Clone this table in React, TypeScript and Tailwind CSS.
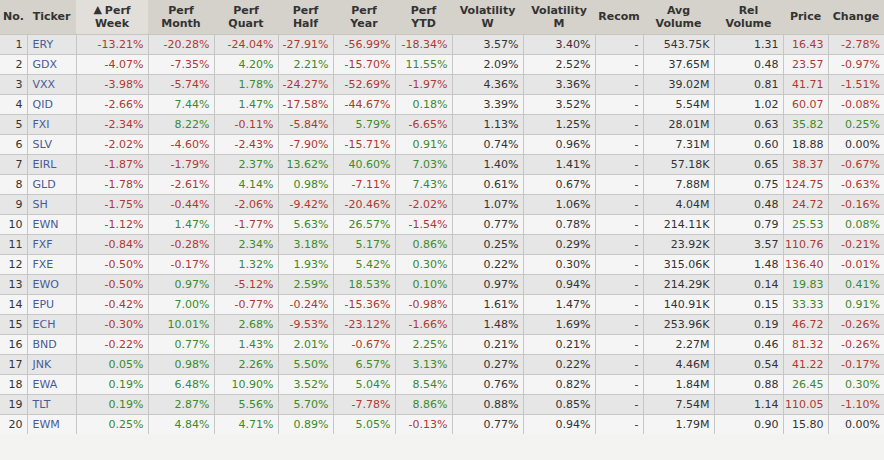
type Row = [string, string, string, string, string, string, string, string, string, string, string, string, string, string];

const rows: Row[] = [
  ['ERY', '-13.21%', '-20.28%', '-24.04%', '-27.91%', '-56.99%', '-18.34%', '3.57%', '3.40%', '-', '543.75K', '1.31', '16.43', '-2.78%'],
  ['GDX', '-4.07%', '-7.35%', '4.20%', '2.21%', '-15.70%', '11.55%', '2.09%', '2.52%', '-', '37.65M', '0.48', '23.57', '-0.97%'],
  ['VXX', '-3.98%', '-5.74%', '1.78%', '-24.27%', '-52.69%', '-1.97%', '4.36%', '3.36%', '-', '39.02M', '0.81', '41.71', '-1.51%'],
  ['QID', '-2.66%', '7.44%', '1.47%', '-17.58%', '-44.67%', '0.18%', '3.39%', '3.52%', '-', '5.54M', '1.02', '60.07', '-0.08%'],
  ['FXI', '-2.34%', '8.22%', '-0.11%', '-5.84%', '5.79%', '-6.65%', '1.13%', '1.25%', '-', '28.01M', '0.63', '35.82', '0.25%'],
  ['SLV', '-2.02%', '-4.60%', '-2.43%', '-7.90%', '-15.71%', '0.91%', '0.74%', '0.96%', '-', '7.31M', '0.60', '18.88', '0.00%'],
  ['EIRL', '-1.87%', '-1.79%', '2.37%', '13.62%', '40.60%', '7.03%', '1.40%', '1.41%', '-', '57.18K', '0.65', '38.37', '-0.67%'],
  ['GLD', '-1.78%', '-2.61%', '4.14%', '0.98%', '-7.11%', '7.43%', '0.61%', '0.67%', '-', '7.88M', '0.75', '124.75', '-0.63%'],
  ['SH', '-1.75%', '-0.44%', '-2.06%', '-9.42%', '-20.46%', '-2.02%', '1.07%', '1.06%', '-', '4.04M', '0.48', '24.72', '-0.16%'],
  ['EWN', '-1.12%', '1.47%', '-1.77%', '5.63%', '26.57%', '-1.54%', '0.77%', '0.78%', '-', '214.11K', '0.79', '25.53', '0.08%'],
  ['FXF', '-0.84%', '-0.28%', '2.34%', '3.18%', '5.17%', '0.86%', '0.25%', '0.29%', '-', '23.92K', '3.57', '110.76', '-0.21%'],
  ['FXE', '-0.50%', '-0.17%', '1.32%', '1.93%', '5.42%', '0.30%', '0.22%', '0.30%', '-', '315.06K', '1.48', '136.40', '-0.01%'],
  ['EWO', '-0.50%', '0.97%', '-5.12%', '2.59%', '18.53%', '0.10%', '0.97%', '0.94%', '-', '214.29K', '0.14', '19.83', '0.41%'],
  ['EPU', '-0.42%', '7.00%', '-0.77%', '-0.24%', '-15.36%', '-0.98%', '1.61%', '1.47%', '-', '140.91K', '0.15', '33.33', '0.91%'],
  ['ECH', '-0.30%', '10.01%', '2.68%', '-9.53%', '-23.12%', '-1.66%', '1.48%', '1.69%', '-', '253.96K', '0.19', '46.72', '-0.26%'],
  ['BND', '-0.22%', '0.77%', '1.43%', '2.01%', '-0.67%', '2.25%', '0.21%', '0.21%', '-', '2.27M', '0.46', '81.32', '-0.26%'],
  ['JNK', '0.05%', '0.98%', '2.26%', '5.50%', '6.57%', '3.13%', '0.27%', '0.22%', '-', '4.46M', '0.54', '41.22', '-0.17%'],
  ['EWA', '0.19%', '6.48%', '10.90%', '3.52%', '5.04%', '8.54%', '0.76%', '0.82%', '-', '1.84M', '0.88', '26.45', '0.30%'],
  ['TLT', '0.19%', '2.87%', '5.56%', '5.70%', '-7.78%', '8.86%', '0.88%', '0.85%', '-', '7.54M', '1.14', '110.05', '-1.10%'],
  ['EWM', '0.25%', '4.84%', '4.71%', '0.89%', '5.05%', '-0.13%', '0.77%', '0.94%', '-', '1.79M', '0.90', '15.80', '0.00%'],
];

const widths = [
  'w-[27px]', 'w-[49px]', 'w-[72px]', 'w-[66px]', 'w-[64px]', 'w-[55px]', 'w-[62px]', 'w-[57px]',
  'w-[71px]', 'w-[72px]', 'w-[48px]', 'w-[71px]', 'w-[69px]', 'w-[45px]', 'w-[56px]',
];

const headers: string[][] = [
  ['No.'], ['Ticker'], ['Perf', 'Week'], ['Perf', 'Month'], ['Perf', 'Quart'], ['Perf', 'Half'],
  ['Perf', 'Year'], ['Perf', 'YTD'], ['Volatility', 'W'], ['Volatility', 'M'], ['Recom'],
  ['Avg', 'Volume'], ['Rel', 'Volume'], ['Price'], ['Change'],
];

// red for losses, green for gains, plain for zero
function tone(v: string) {
  if (v.startsWith('-')) return 'text-[#ab3a33]';
  if (parseFloat(v) === 0) return 'text-[#333]';
  return 'text-[#3b8a2b]';
}

export default function App() {
  return (
    <div className="h-[460px] w-[884px] overflow-hidden bg-[#f3f3f1] font-['DejaVu_Sans',Verdana,sans-serif] text-[11px] text-[#333]">
      <table className="w-[884px] table-fixed border-collapse">
        <colgroup>
          {widths.map((w, i) => (
            <col key={i} className={w} />
          ))}
        </colgroup>
        <thead>
          <tr>
            {headers.map((h, i) => (
              <th
                key={i}
                className={`h-[34px] p-0 text-center align-middle font-bold leading-[13px] text-[#333] ${
                  i === 2 ? 'bg-[#e2dfdb]' : 'bg-[#d5d1cb]'
                }`}
              >
                {i === 2 && <span className="mr-[3px] align-[1px] text-[11px] leading-[10px]">▲</span>}
                {h[0]}
                {h[1] && (
                  <>
                    <br />
                    {h[1]}
                  </>
                )}
              </th>
            ))}
          </tr>
        </thead>
        <tbody>
          {rows.map((r, idx) => {
            const bg = idx % 2 === 0 ? 'bg-[#e6e6e6]' : 'bg-[#f5f5f5]';
            const changeTone = tone(r[13]);
            return (
              <tr key={r[0]} className={bg}>
                <td className="h-5 border-r border-t border-[#c6c6c6] p-0 pr-[4px] text-right leading-[19px]">
                  {idx + 1}
                </td>
                <td className="h-5 border-r border-t border-[#c6c6c6] p-0 pl-[5px] text-left leading-[19px] text-[#4a5a96]">
                  {r[0]}
                </td>
                {r.slice(1).map((v, j) => {
                  const col = j + 1;
                  let color = 'text-[#333]';
                  if (col <= 6) color = tone(v);
                  if (col === 12) color = changeTone;
                  if (col === 13) color = changeTone;
                  const last = col === 13;
                  return (
                    <td
                      key={col}
                      className={`h-5 border-t border-[#c6c6c6] p-0 pr-[4px] text-right leading-[19px] whitespace-nowrap ${
                        last ? '' : 'border-r'
                      } ${color}`}
                    >
                      {v}
                    </td>
                  );
                })}
              </tr>
            );
          })}
        </tbody>
      </table>
    </div>
  );
}
